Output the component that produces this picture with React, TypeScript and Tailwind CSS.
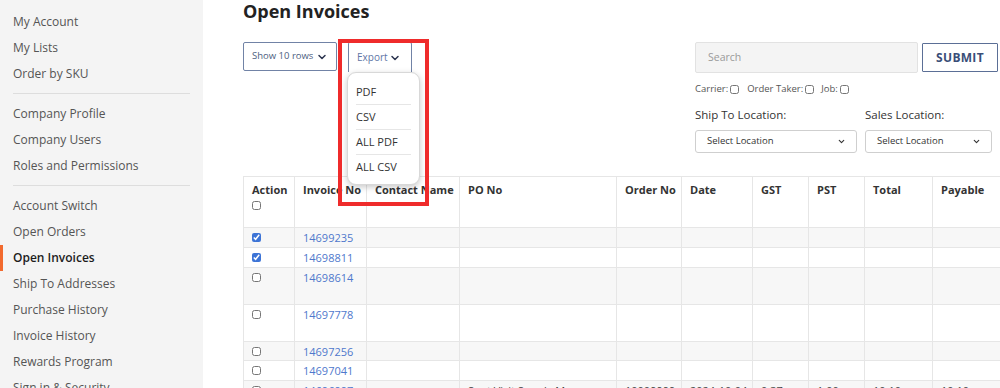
import React from 'react';
import { ChevronDown } from 'lucide-react';

const sideGroups: string[][] = [
    ['My Account', 'My Lists', 'Order by SKU'],
    ['Company Profile', 'Company Users', 'Roles and Permissions'],
    ['Account Switch', 'Open Orders', 'Open Invoices', 'Ship To Addresses', 'Purchase History', 'Invoice History', 'Rewards Program', 'Sign in & Security'],
];

const columns = [
    { label: 'Action', width: 51 },
    { label: 'Invoice No', width: 72 },
    { label: 'Contact Name', width: 93 },
    { label: 'PO No', width: 157 },
    { label: 'Order No', width: 65 },
    { label: 'Date', width: 71 },
    { label: 'GST', width: 56 },
    { label: 'PST', width: 56 },
    { label: 'Total', width: 68 },
    { label: 'Payable', width: 80 },
];

interface Row {
    invoice: string;
    checked: boolean;
    height: number;
    po?: string;
    order?: string;
    date?: string;
    gst?: string;
    pst?: string;
    total?: string;
    payable?: string;
}

const rows: Row[] = [
    { invoice: '14699235', checked: true, height: 20 },
    { invoice: '14698811', checked: true, height: 20 },
    { invoice: '14698614', checked: false, height: 37 },
    { invoice: '14697778', checked: false, height: 37 },
    { invoice: '14697256', checked: false, height: 19 },
    { invoice: '14697041', checked: false, height: 20 },
    { invoice: '14696997', checked: false, height: 20, po: 'Sept Visit Supply Ma', order: '10009999', date: '2024-10-04', gst: '0.37', pst: '1.00', total: '10.10', payable: '10.10' },
];

const Checkbox = ({ checked = false }: { checked?: boolean }) => (
    <input
        type="checkbox"
        defaultChecked={checked}
        className="m-0 block w-[9px] h-[9px] accent-[#3d74d6]"
    />
);

const Sidebar = () => (
    <aside className="w-[203px] shrink-0 bg-[#f4f4f4] pt-[9px] text-[12px] text-[#555]">
        {sideGroups.map((group, gi) => (
            <div key={gi}>
                {gi > 0 && <div className="mx-[13px] mt-[6px] mb-[7px] h-px bg-[#dddddd]" />}
                {group.map((item) => {
                    const active = item === 'Open Invoices';
                    return (
                        <div
                            key={item}
                            className={`h-[26px] flex items-center whitespace-nowrap ${active ? 'border-l-[3px] border-[#f26a2e] pl-[10px] font-semibold text-[#1c1c1c]' : 'pl-[13px]'}`}
                        >
                            {item}
                        </div>
                    );
                })}
            </div>
        ))}
    </aside>
);

const Toolbar = () => (
    <div className="relative flex gap-[11px]">
        <button className="h-[29px] w-[94px] flex items-center justify-between whitespace-nowrap pl-[8px] pr-[8px] border border-[#7183a6] rounded-[2px] text-[9.5px] text-[#4d5e80] bg-white">
            Show 10 rows
            <ChevronDown size={12} strokeWidth={3} className="text-[#2c3550] shrink-0" />
        </button>
        <button className="h-[30px] w-[64px] flex items-center justify-between whitespace-nowrap pl-[8px] pr-[10px] border border-b-0 border-[#7183a6] rounded-t-[2px] text-[10px] text-[#5f76a6] bg-white">
            Export
            <ChevronDown size={12} strokeWidth={3} className="text-[#2c3550] shrink-0" />
        </button>

        {/* export menu */}
        <div className="absolute left-[104px] top-[30px] w-[73px] h-[113px] bg-white border border-[#d8d8d8] rounded-[9px] shadow-[0_2px_6px_rgba(0,0,0,0.22)] px-[8px] pt-[7px] z-10">
            {['PDF', 'CSV', 'ALL PDF', 'ALL CSV'].map((opt, i) => (
                <div key={opt} className={`h-[25px] flex items-center text-[11px] text-[#333] ${i < 3 ? 'border-b border-[#e6e6e6]' : ''}`}>
                    {opt}
                </div>
            ))}
        </div>

        {/* highlight */}
        <div className="absolute left-[95px] top-[-3px] w-[91px] h-[167px] border-[4px] border-[#ef2b2b] z-20 pointer-events-none" />
    </div>
);

const Filters = () => (
    <div className="w-[303px] shrink-0">
        <div className="flex items-start">
            <div className="w-[223px] h-[31px] bg-[#f4f4f4] border border-[#e2e2e2] rounded-[2px] flex items-center pl-[12px] text-[10.5px] text-[#9a9a9a]">
                Search
            </div>
            <button className="ml-[4px] mt-[1px] w-[76px] h-[29px] border-[1.5px] border-[#5b6f96] rounded-[1px] text-[12px] font-bold tracking-[0.3px] text-[#3a4e78] bg-white">
                SUBMIT
            </button>
        </div>
        <div className="mt-[10px] flex items-center text-[9.5px] text-[#555] h-[12px]">
            <span>Carrier:</span>
            <span className="ml-[2px]"><Checkbox /></span>
            <span className="ml-[8px]">Order Taker:</span>
            <span className="ml-[2px]"><Checkbox /></span>
            <span className="ml-[7px]">Job:</span>
            <span className="ml-[2px]"><Checkbox /></span>
        </div>
        <div className="mt-[12px] flex gap-[8px]">
            <div className="w-[162px]">
                <div className="text-[11.5px] text-[#333] leading-[16px]">Ship To Location:</div>
                <div className="mt-[7px] h-[23px] border border-[#cfcfcf] rounded-[3px] flex items-center justify-between pl-[11px] pr-[10px] text-[9.5px] text-[#333]">
                    Select Location
                    <ChevronDown size={9} strokeWidth={3} className="text-[#333]" />
                </div>
            </div>
            <div className="w-[127px]">
                <div className="text-[11.5px] text-[#333] leading-[16px]">Sales Location:</div>
                <div className="mt-[7px] h-[23px] border border-[#cfcfcf] rounded-[3px] flex items-center justify-between pl-[11px] pr-[10px] text-[9.5px] text-[#333]">
                    Select Location
                    <ChevronDown size={9} strokeWidth={3} className="text-[#333]" />
                </div>
            </div>
        </div>
    </div>
);

const InvoiceTable = () => (
    <table className="table-fixed border-collapse w-[769px] text-[11px]">
        <colgroup>
            {columns.map((c) => <col key={c.label} style={{ width: c.width }} />)}
        </colgroup>
        <thead>
            <tr className="h-[51px] align-top">
                {columns.map((c, i) => (
                    <th key={c.label} className="border border-[#e6e6e6] pl-[8px] pt-[6px] text-left font-bold text-[#333] leading-[14px] whitespace-nowrap">
                        {c.label}
                        {i === 0 && <div className="mt-[4px]"><Checkbox /></div>}
                    </th>
                ))}
            </tr>
        </thead>
        <tbody>
            {rows.map((r, ri) => {
                const cells = ['', '', '', r.po ?? '', r.order ?? '', r.date ?? '', r.gst ?? '', r.pst ?? '', r.total ?? '', r.payable ?? ''];
                return (
                    <tr key={r.invoice} className={`align-top ${ri % 2 === 0 ? 'bg-[#f7f7f7]' : 'bg-white'}`} style={{ height: r.height }}>
                        {cells.map((val, ci) => (
                            <td key={ci} className="border border-[#e6e6e6] pl-[8px] pt-[3px] leading-[14px] text-[#444] whitespace-nowrap overflow-hidden">
                                {ci === 0 && <div className="pt-[2px]"><Checkbox checked={r.checked} /></div>}
                                {ci === 1 && <span className="text-[#4f78cc] text-[11px]">{r.invoice}</span>}
                                {ci > 1 && val}
                            </td>
                        ))}
                    </tr>
                );
            })}
        </tbody>
    </table>
);

export default function App() {
    return (
        <div className="w-[1000px] h-[388px] overflow-hidden flex bg-white" style={{ fontFamily: '"Open Sans", "Liberation Sans", sans-serif' }}>
            <Sidebar />
            <main className="flex-1 min-w-0 pl-[40px] pr-[2px] overflow-hidden">
                <h1 className="mt-[2px] text-[18px] leading-[18px] font-bold text-[#222]">Open Invoices</h1>
                <div className="mt-[22px] flex justify-between items-start">
                    <Toolbar />
                    <Filters />
                </div>
                <div className="mt-[23px] w-max">
                    <InvoiceTable />
                </div>
            </main>
        </div>
    );
}
